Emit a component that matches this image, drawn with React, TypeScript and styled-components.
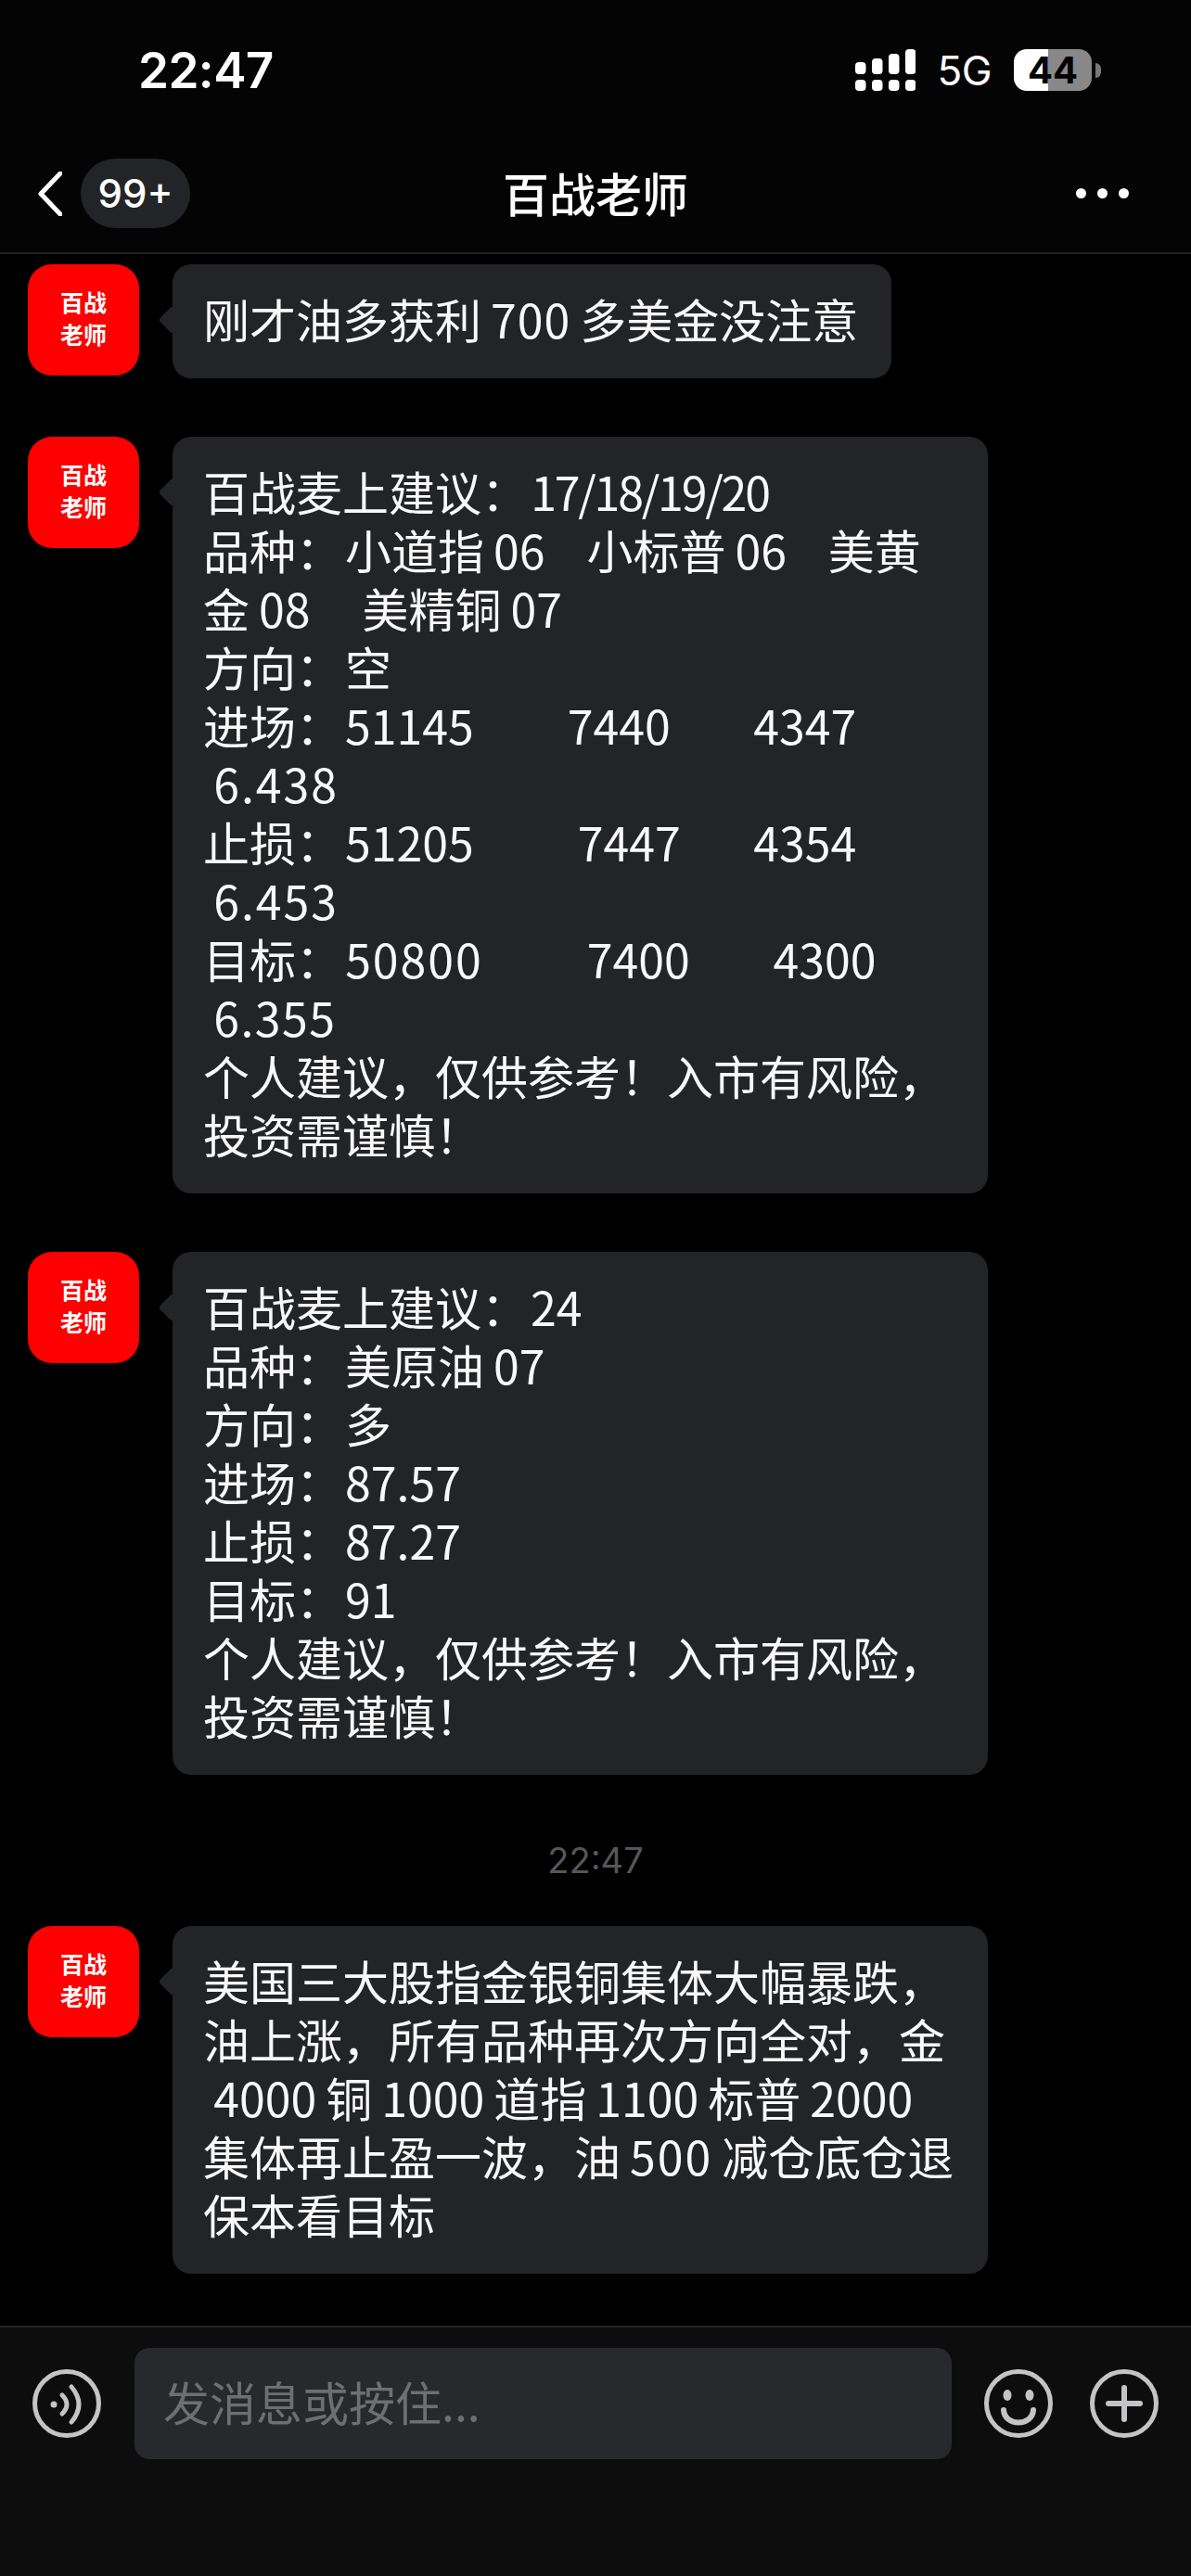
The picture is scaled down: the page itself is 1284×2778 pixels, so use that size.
import React from "react";
import styled, { createGlobalStyle } from "styled-components";

const Global = createGlobalStyle`
  html, body { margin: 0; padding: 0; background: #000; }
  #root { width: 1284px; height: 2778px; }
  * { box-sizing: border-box; }
`;

const FONT = `"Noto Sans CJK SC", "Noto Sans", sans-serif`;

const Phone = styled.div`
  width: 1284px;
  height: 2778px;
  display: flex;
  flex-direction: column;
  background: #000;
  color: #fff;
  font-family: ${FONT};
  overflow: hidden;
`;

const StatusBar = styled.div`
  height: 145px;
  flex: none;
  background: #040404;
  display: flex;
  align-items: flex-start;
  justify-content: space-between;
  padding: 53px 107px 0 149px;
`;

const Clock = styled.div`
  font-family: "Inter", sans-serif;
  font-size: 53px;
  font-weight: 600;
  line-height: 46px;
  letter-spacing: -0.6px;
`;

const StatusRight = styled.div`
  display: flex;
  align-items: flex-start;
`;

const NetLabel = styled.div`
  font-family: "Inter", sans-serif;
  font-size: 44px;
  line-height: 47px;
  margin: 0 24px 0 23px;
  letter-spacing: -0.5px;
`;

const Battery = styled.div`
  position: relative;
  width: 84px;
  height: 45px;
  border-radius: 14px;
  background: linear-gradient(90deg, #fff 0 37px, #888 37px 100%);
  color: #000;
  font-family: "Inter", sans-serif;
  font-size: 40px;
  font-weight: 700;
  line-height: 45px;
  text-align: center;
  &::after {
    content: "";
    position: absolute;
    left: 88px;
    top: 15px;
    width: 6px;
    height: 16px;
    background: #777;
    border-radius: 0 8px 8px 0;
  }
`;

const NavBar = styled.div`
  height: 129px;
  flex: none;
  background: #040404;
  border-bottom: 2px solid #222;
  display: grid;
  grid-template-columns: 1fr auto 1fr;
  align-items: center;
  padding: 0 41px;
`;

const NavLeft = styled.div`
  display: flex;
  align-items: center;
  gap: 20px;
`;

const Badge = styled.div`
  width: 118px;
  height: 75px;
  border-radius: 38px;
  background: #232427;
  display: flex;
  align-items: center;
  justify-content: center;
  font-family: "Inter", sans-serif;
  font-size: 42px;
  font-weight: 500;
`;

const Title = styled.div`
  font-size: 50px;
  font-weight: 500;
  line-height: 60px;
  padding-bottom: 3px;
`;

const NavRight = styled.div`
  display: flex;
  justify-content: flex-end;
  gap: 12px;
  padding-right: 26px;
`;

const Dot = styled.span`
  width: 11px;
  height: 11px;
  border-radius: 50%;
  background: #fff;
`;

const MessageList = styled.div`
  flex: 1;
  min-height: 0;
  display: flex;
  flex-direction: column;
  padding-top: 11px;
`;

const Row = styled.div`
  display: flex;
  align-items: flex-start;
  gap: 36px;
  padding-left: 30px;
  margin-bottom: 63px;
`;

const Avatar = styled.div`
  width: 120px;
  height: 120px;
  flex: none;
  border-radius: 26px;
  background: #fe0000;
  color: #fff;
  display: flex;
  align-items: center;
  justify-content: center;
  text-align: center;
  font-size: 25px;
  font-weight: 700;
  line-height: 35px;
  padding-bottom: 4px;
`;

const Bubble = styled.div<{ $wide?: boolean }>`
  position: relative;
  width: ${(p) => (p.$wide ? "879px" : "fit-content")};
  padding: 27px 36px 33px 33px;
  border-radius: 20px;
  background: #232426;
  color: #f8f8f8;
  font-size: 50px;
  line-height: 63px;
  white-space: pre;
  &::before {
    content: "";
    position: absolute;
    left: -11px;
    top: 49px;
    width: 22px;
    height: 22px;
    background: #232426;
    border-radius: 4px;
    transform: rotate(45deg);
  }
`;

const Digits = styled.span<{ $ls: number }>`
  display: inline-block;
  line-height: 63px;
  letter-spacing: ${(p) => p.$ls}px;
`;

const Timestamp = styled.div`
  height: 58px;
  line-height: 58px;
  margin-bottom: 42px;
  text-align: center;
  color: #555658;
  font-family: "Inter", sans-serif;
  font-size: 38px;
`;

const InputBar = styled.div`
  height: 270px;
  flex: none;
  background: #0d0d0d;
  border-top: 2px solid #232323;
  padding: 22px 35px 0 35px;
  display: flex;
  align-items: flex-start;
`;

const RoundIcon = styled.svg<{ $left: number }>`
  width: 74px;
  height: 74px;
  flex: none;
  margin-top: 23px;
  margin-left: ${(p) => p.$left}px;
  fill: none;
  stroke: #c4c4c6;
  stroke-linecap: round;
`;

const InputField = styled.div`
  width: 881px;
  height: 120px;
  margin-left: 36px;
  border-radius: 16px;
  background: #28292d;
  color: #6e6f73;
  font-size: 50px;
  line-height: 114px;
  padding-left: 31px;
`;

const Signal = () => (
  <svg width="65" height="45" viewBox="0 0 65 45" fill="#fff">
    <rect x="0" y="14" width="11.5" height="13" rx="4" />
    <rect x="18" y="10" width="11.5" height="17" rx="4" />
    <rect x="36" y="5" width="11.5" height="22" rx="4" />
    <rect x="54" y="0" width="11.5" height="27" rx="4" />
    <rect x="0" y="33" width="11.5" height="12" rx="4" />
    <rect x="18" y="33" width="11.5" height="12" rx="4" />
    <rect x="36" y="33" width="11.5" height="12" rx="4" />
    <rect x="54" y="33" width="11.5" height="12" rx="4" />
  </svg>
);

const Chevron = () => (
  <svg width="26" height="48" viewBox="0 0 26 48" fill="none" stroke="#fff" strokeWidth="5" strokeLinecap="round" strokeLinejoin="round">
    <path d="M24 2 L3 24 L24 46" />
  </svg>
);

const g = "\u2009";
const h = "\u200A";
const w = (n: number) => " ".repeat(n);
const colon = "\uFF1A" + h;
const comma = "\uFF0C";
const bang = "\uFF01";
const closing = `个人建议${comma}仅供参考${bang}入市有风险${comma}\n投资需谨慎${bang}`;

const Message = ({ children, wide }: { children: React.ReactNode; wide?: boolean }) => (
  <Row>
    <Avatar>
      百战
      <br />
      老师
    </Avatar>
    <Bubble $wide={wide}>{children}</Bubble>
  </Row>
);

export default function App() {
  return (
    <Phone lang="zh-CN">
      <Global />
      <StatusBar>
        <Clock>22:47</Clock>
        <StatusRight>
          <Signal />
          <NetLabel>5G</NetLabel>
          <Battery>44</Battery>
        </StatusRight>
      </StatusBar>
      <NavBar>
        <NavLeft>
          <Chevron />
          <Badge>99+</Badge>
        </NavLeft>
        <Title>百战老师</Title>
        <NavRight>
          <Dot />
          <Dot />
          <Dot />
        </NavRight>
      </NavBar>
      <MessageList>
        <Message>
          刚才油多获利{g}
          <Digits $ls={1}>700</Digits>
          {g}多美金没注意
        </Message>
        <Message wide>
          百战麦上建议{colon}
          <Digits $ls={-2.2}>17/18/19/20</Digits>
          {`\n品种${colon}小道指${g}06${w(4)}小标普${g}06${w(4)}美黄\n金${g}08${w(5)}美精铜${g}07\n方向${colon}空\n进场${colon}51145${w(9)}7440${w(8)}4347\n `}
          <Digits $ls={2}>6.438</Digits>
          {`\n止损${colon}51205${w(10)}7447${w(7)}4354\n `}
          <Digits $ls={2}>6.453</Digits>
          {`\n目标${colon}`}
          <Digits $ls={2}>50800</Digits>
          {`${w(10)}7400${w(8)}4300\n `}
          <Digits $ls={1.5}>6.355</Digits>
          {`\n${closing}`}
        </Message>
        <Message wide>
          {`百战麦上建议${colon}24\n品种${colon}美原油${g}07\n方向${colon}多\n进场${colon}87.57\n止损${colon}87.27\n目标${colon}91\n${closing}`}
        </Message>
        <Timestamp>22:47</Timestamp>
        <Message wide>
          {`美国三大股指金银铜集体大幅暴跌${comma}\n油上涨${comma}所有品种再次方向全对${comma}金\n 4000${g}铜${g}1000${g}道指${g}1100${g}标普${g}2000\n集体再止盈一波${comma}油${g}`}
          <Digits $ls={2}>500</Digits>
          {`${g}减仓底仓退\n保本看目标`}
        </Message>
      </MessageList>
      <InputBar>
        <RoundIcon $left={0} viewBox="0 0 74 74">
          <circle cx="37" cy="37" r="34.5" strokeWidth="5" />
          <circle cx="23" cy="38" r="3.5" fill="#c4c4c6" stroke="none" />
          <path d="M32 28 Q42 38 32 48" strokeWidth="5" />
          <path d="M42 19 Q58 38 42 57" strokeWidth="5" />
        </RoundIcon>
        <InputField>发消息或按住...</InputField>
        <RoundIcon $left={35} viewBox="0 0 74 74">
          <circle cx="37" cy="37" r="34.5" strokeWidth="5" />
          <ellipse cx="25" cy="28" rx="4.5" ry="6" fill="#c4c4c6" stroke="none" />
          <ellipse cx="49" cy="28" rx="4.5" ry="6" fill="#c4c4c6" stroke="none" />
          <path d="M21 44 C22 62 52 62 53 44" strokeWidth="6" />
        </RoundIcon>
        <RoundIcon $left={40} viewBox="0 0 74 74">
          <circle cx="37" cy="37" r="34.5" strokeWidth="5" />
          <path d="M20 37 H54 M37 20 V54" strokeWidth="6" />
        </RoundIcon>
      </InputBar>
    </Phone>
  );
}
